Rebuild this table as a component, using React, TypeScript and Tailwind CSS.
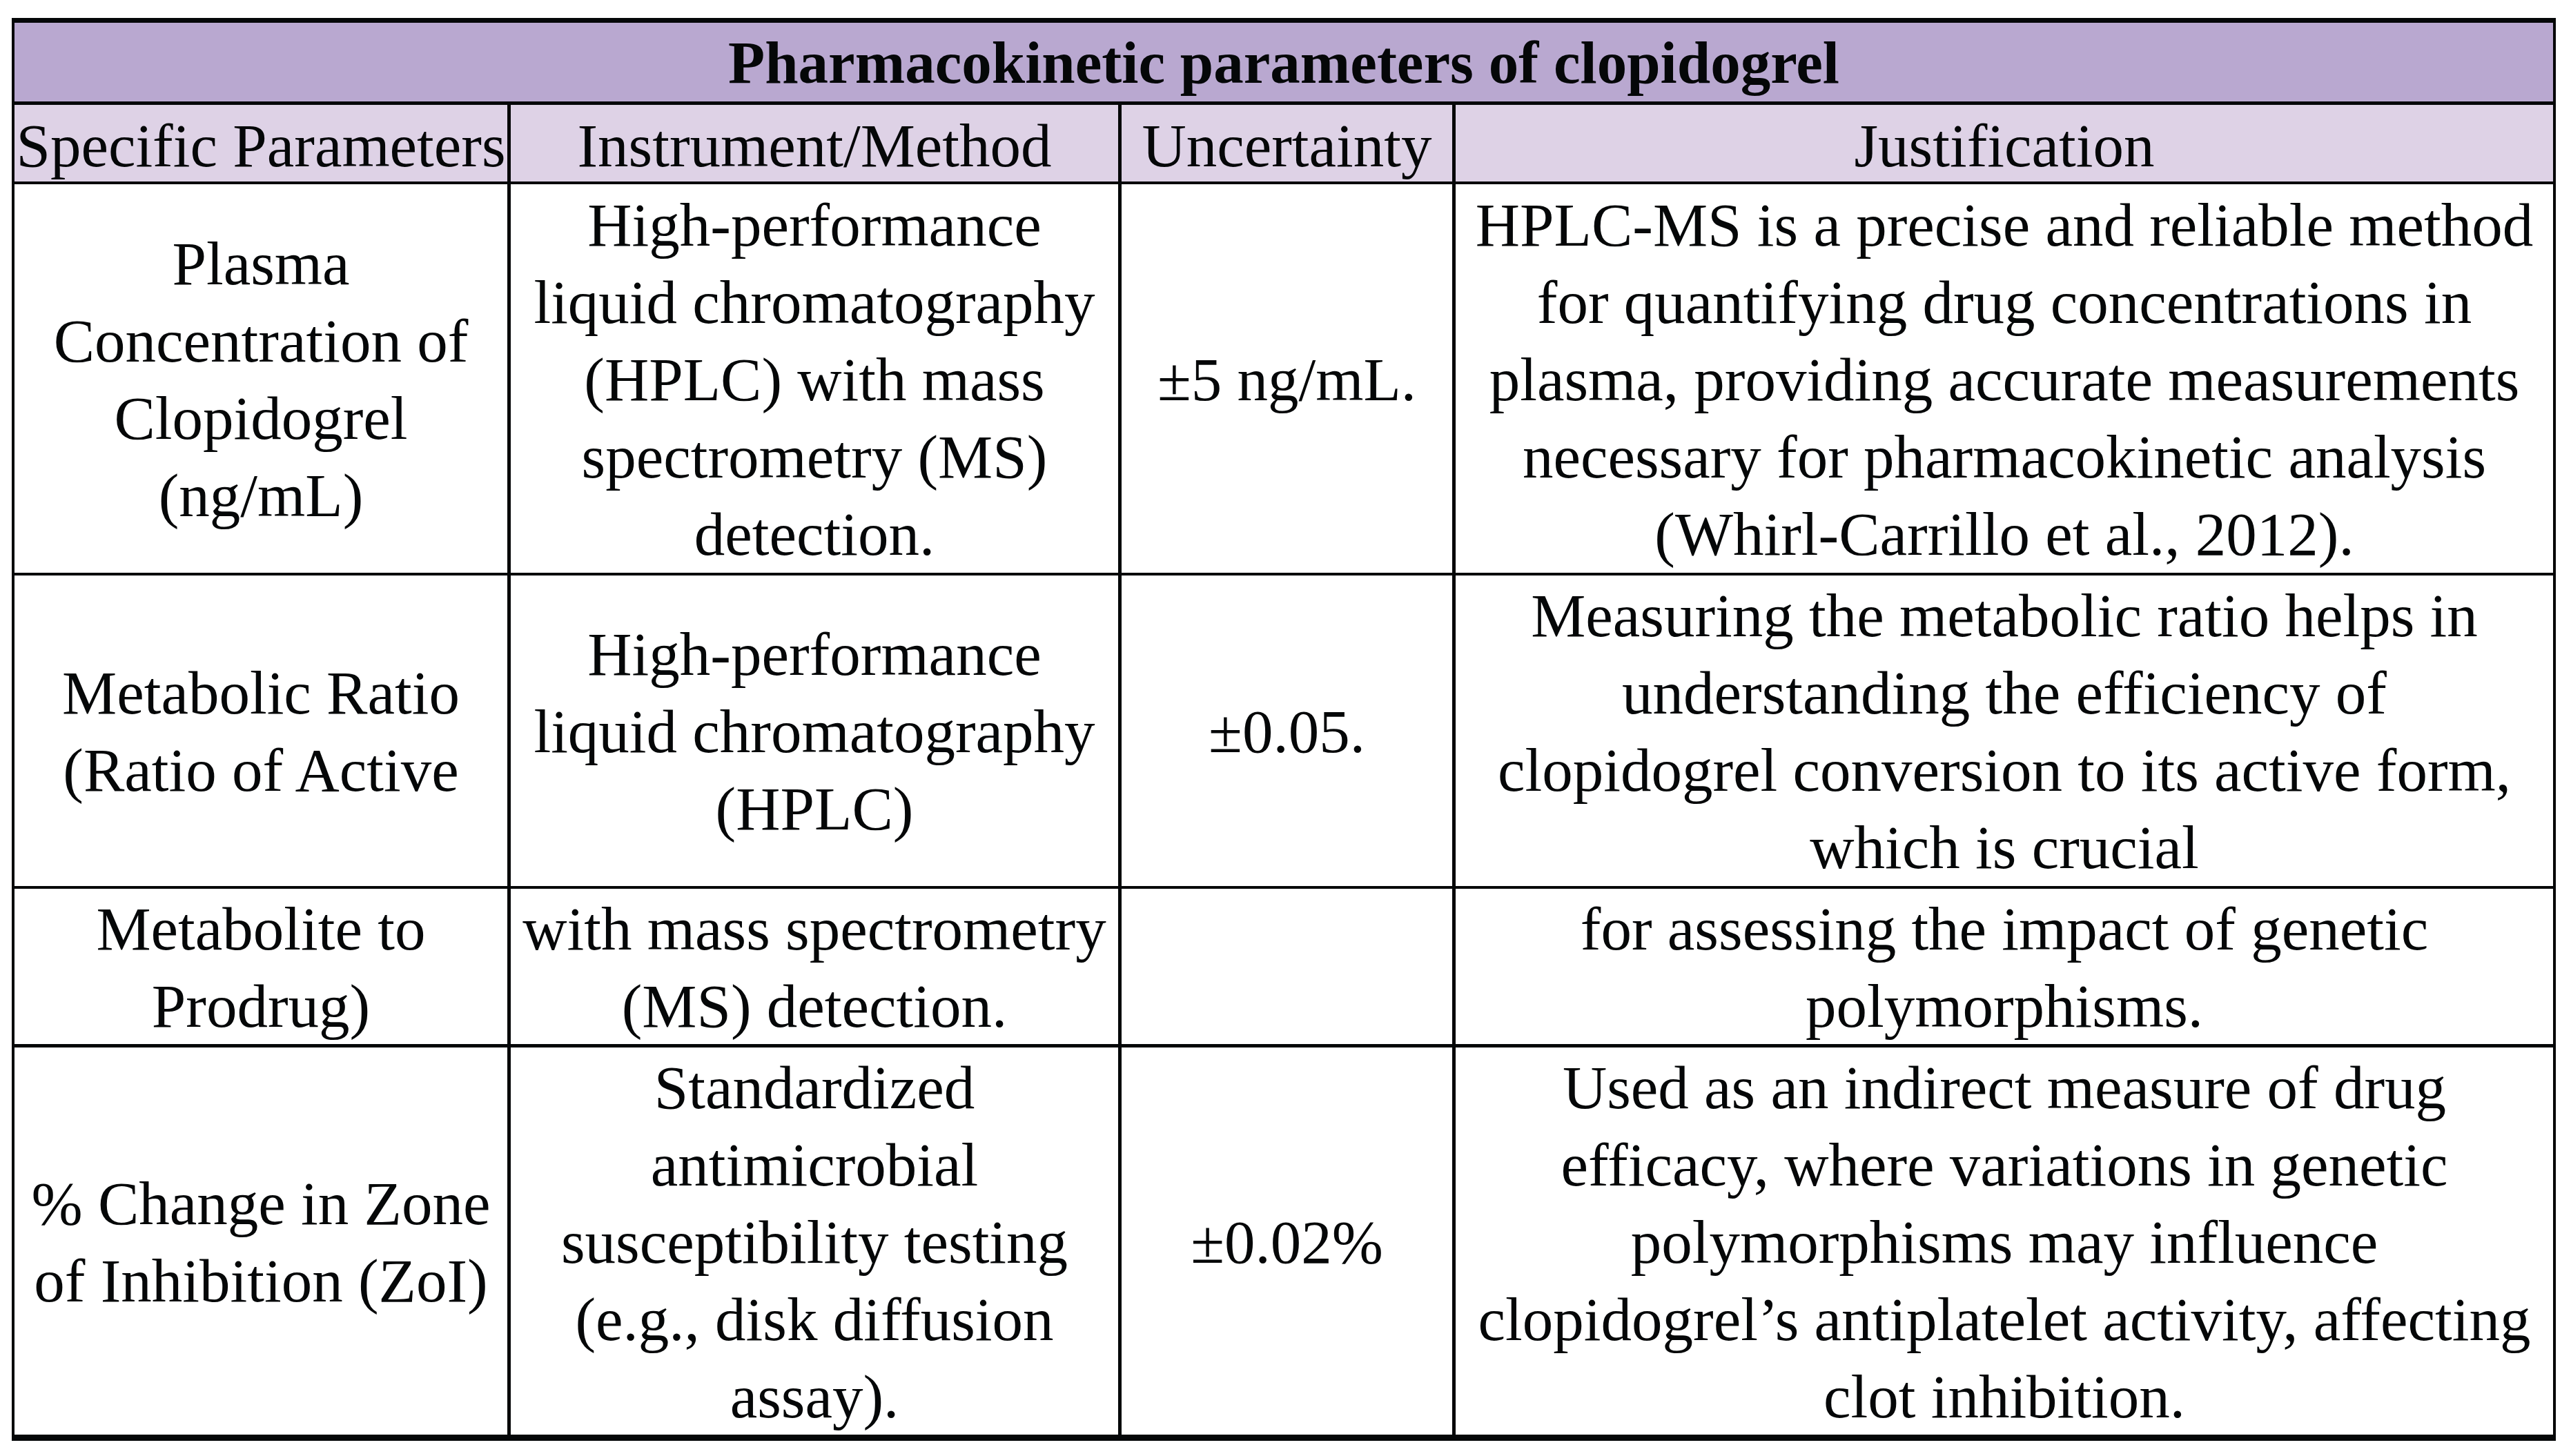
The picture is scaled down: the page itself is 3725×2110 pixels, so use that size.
import clsx from "clsx";

type Row = {
  h: string;
  line: string;
  cells: string[][];
};

const HEADERS = ["Specific Parameters", "Instrument/Method", "Uncertainty", "Justification"];

// line breaks follow the printed table; heights include the bottom rule
const ROWS: Row[] = [
  {
    h: "h-[567px]",
    line: "border-b-[4px]",
    cells: [
      ["Plasma", "Concentration of", "Clopidogrel", "(ng/mL)"],
      ["High-performance", "liquid chromatography", "(HPLC) with mass", "spectrometry (MS)", "detection."],
      ["±5 ng/mL."],
      [
        "HPLC-MS is a precise and reliable method",
        "for quantifying drug concentrations in",
        "plasma, providing accurate measurements",
        "necessary for pharmacokinetic analysis",
        "(Whirl-Carrillo et al., 2012).",
      ],
    ],
  },
  {
    h: "h-[454px]",
    line: "border-b-[4px]",
    cells: [
      ["Metabolic Ratio", "(Ratio of Active"],
      ["High-performance", "liquid chromatography", "(HPLC)"],
      ["±0.05."],
      [
        "Measuring the metabolic ratio helps in",
        "understanding the efficiency of",
        "clopidogrel conversion to its active form,",
        "which is crucial",
      ],
    ],
  },
  {
    h: "h-[230px]",
    line: "border-b-[5px]",
    cells: [
      ["Metabolite to", "Prodrug)"],
      ["with mass spectrometry", "(MS) detection."],
      [],
      ["for assessing the impact of genetic", "polymorphisms."],
    ],
  },
  {
    h: "h-[561px]",
    line: "",
    cells: [
      ["% Change in Zone", "of Inhibition (ZoI)"],
      ["Standardized", "antimicrobial", "susceptibility testing", "(e.g., disk diffusion", "assay)."],
      ["±0.02%"],
      [
        "Used as an indirect measure of drug",
        "efficacy, where variations in genetic",
        "polymorphisms may influence",
        "clopidogrel’s antiplatelet activity, affecting",
        "clot inhibition.",
      ],
    ],
  },
];

const COLS = "grid grid-cols-[719px_885px_484px_1fr]";

function Cell({ lines, last }: { lines: string[]; last?: boolean }) {
  return (
    <div
      className={clsx(
        "flex flex-col justify-center pt-[2px] text-center",
        !last && "border-r-[5px] border-[#050708]",
      )}
    >
      {lines.map((l, i) => (
        <div key={i} className="whitespace-nowrap">
          {l}
        </div>
      ))}
    </div>
  );
}

export default function App() {
  return (
    <div className="min-h-screen bg-white pl-[17px] pt-[26px]">
      <div className="w-[3686px] border-x-[4px] border-t-[7px] border-b-[9px] border-[#050708] font-['Liberation_Serif','Times_New_Roman',serif] text-[89px] leading-[112px] text-[#050708]">
        <div className="flex h-[119px] items-center justify-center border-b-[5px] border-[#050708] bg-[#b9a8d0] pt-[2px] text-[87px] font-bold">
          Pharmacokinetic parameters of clopidogrel
        </div>

        <div className={clsx(COLS, "h-[115px] border-b-[4px] border-[#050708] bg-[#ded2e6]")}>
          {HEADERS.map((h, i) => (
            <div
              key={h}
              className={clsx(
                "flex items-center justify-center whitespace-nowrap pt-[3px]",
                i < 3 && "border-r-[5px] border-[#050708]",
              )}
            >
              {h}
            </div>
          ))}
        </div>

        {ROWS.map((row, r) => (
          <div key={r} className={clsx(COLS, row.h, row.line, "border-[#050708]")}>
            {row.cells.map((lines, c) => (
              <Cell key={c} lines={lines} last={c === 3} />
            ))}
          </div>
        ))}
      </div>
    </div>
  );
}
